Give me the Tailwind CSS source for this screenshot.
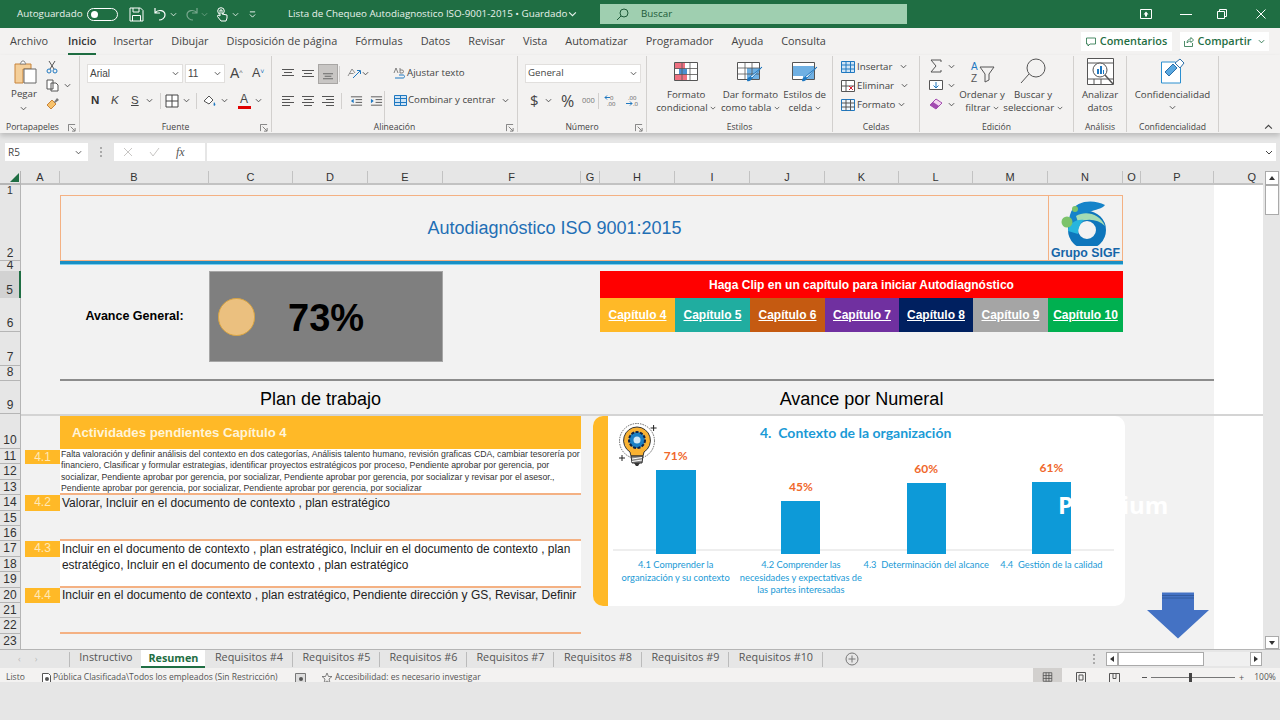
<!DOCTYPE html>
<html lang="es">
<head>
    <meta charset="UTF-8">
    <meta name="viewport" content="width=device-width, initial-scale=1.0">
    <title>Lista de Chequeo Autodiagnostico ISO-9001-2015</title>
    <script src="https://cdn.jsdelivr.net/npm/@tailwindcss/browser@4"></script>
</head>
<body class="bg-[#e6e6e6] overflow-hidden">
<svg class="hidden">
    <symbol id="chev" viewBox="0 0 8 5"><path d="M1 1l3 3 3-3" fill="none" stroke="currentColor" stroke-width="1"/></symbol>
    <symbol id="launch" viewBox="0 0 9 9"><path d="M.5 8V.5H8M3 3l4.500 4.500M4.500 8H8V4.500" fill="none" stroke="#666" stroke-width=".9"/></symbol>
    <symbol id="lines" viewBox="0 0 14 12"><path d="M1 1.500h12M1 4.500h12M1 7.500h12M1 10.500h12" stroke="#555" stroke-width="1"/></symbol>
    <symbol id="linesc" viewBox="0 0 14 12"><path d="M1 1.500h12M3 4.500h8M1 7.500h12M3 10.500h8" stroke="#555" stroke-width="1"/></symbol>
    <symbol id="linesr" viewBox="0 0 14 12"><path d="M1 1.500h12M5 4.500h8M1 7.500h12M5 10.500h8" stroke="#555" stroke-width="1"/></symbol>
    <symbol id="linesl" viewBox="0 0 14 12"><path d="M1 1.500h12M1 4.500h8M1 7.500h12M1 10.500h8" stroke="#555" stroke-width="1"/></symbol>
    <symbol id="table" viewBox="0 0 14 14"><path d="M1 1h12v12H1zM1 7h12M7 1v12" fill="#fff" stroke="#444" stroke-width="1"/></symbol>
</svg>
<div class="w-[1280px] h-[720px] flex flex-col font-['Open_Sans',sans-serif] text-[#444]">

    <!-- Title bar -->
    <header class="h-[28px] bg-[#1f6e43] text-[#e8f2ec] flex items-center text-[9.8px] shrink-0 relative">
        <span class="ml-[17px] w-[70px]">Autoguardado</span>
        <span class="w-[31px] h-[13px] rounded-full border border-white flex items-center pl-[3px]"><span class="w-[7px] h-[7px] rounded-full bg-white"></span></span>
        <svg class="ml-[11px] w-[15px] h-[15px]" viewBox="0 0 15 15"><path d="M1 1h10.500L14 3.500V14H1zM4 1v4h6V1M3.500 14V8.500h8V14" fill="none" stroke="#fff" stroke-width="1"/></svg>
        <svg class="ml-[9px] w-[14px] h-[14px]" viewBox="0 0 14 14"><path d="M2 1v5h5M2 6c3-4 10-3 10 2 0 3-3 5-6 5" fill="none" stroke="#fff" stroke-width="1.200"/></svg>
        <svg class="ml-[3px] w-[7px] h-[5px]"><use href="#chev"/></svg>
        <svg class="ml-[8px] w-[14px] h-[14px] opacity-40" viewBox="0 0 14 14"><path d="M12 1v5H7M12 6C9 2 2 3 2 8c0 3 3 5 6 5" fill="none" stroke="#fff" stroke-width="1.200"/></svg>
        <svg class="ml-[2px] w-[7px] h-[5px] opacity-40"><use href="#chev"/></svg>
        <svg class="ml-[8px] w-[12px] h-[15px]" viewBox="0 0 12 15"><circle cx="5" cy="4" r="3.300" fill="none" stroke="#fff"/><path d="M4 3v6L2 8 1.500 9.500 5 14h5l1-3V8L6 7V3z" fill="#1f6e43" stroke="#fff"/></svg>
        <svg class="ml-[4px] w-[7px] h-[5px]"><use href="#chev"/></svg>
        <svg class="ml-[10px] w-[7px] h-[7px]" viewBox="0 0 8 8"><path d="M1 1h6M1 4l3 3 3-3" fill="none" stroke="#fff"/></svg>
        <span class="ml-[32px] w-[280px] whitespace-nowrap">Lista de Chequeo Autodiagnostico ISO-9001-2015 &bull; Guardado</span>
        <svg class="w-[9px] h-[6px]"><use href="#chev"/></svg>
        <div class="ml-[23px] w-[307px] h-[20px] bg-[#9fcfb0] flex items-center text-[#1d5a38]">
            <svg class="ml-[16px] w-[13px] h-[13px]" viewBox="0 0 13 13"><circle cx="8" cy="5" r="4" fill="none" stroke="#1d5a38"/><path d="M5 8l-4 4" stroke="#1d5a38"/></svg>
            <span class="ml-[12px]">Buscar</span>
        </div>
        <div class="ml-[233px] flex items-center gap-[25px]">
            <svg class="w-[12px] h-[10px]" viewBox="0 0 12 10"><path d="M.5.500h11v9H.5z" fill="none" stroke="#fff"/><path d="M6 2.500L3.500 5.500h1.500v2h2v-2h1.500z" fill="#fff"/></svg>
            <span class="w-[12px] h-px bg-white ml-[3px]"></span>
            <svg class="w-[10px] h-[10px]" viewBox="0 0 10 10"><path d="M.5 2.500h7v7h-7zM2.500 2.500v-2h7v7h-2" fill="none" stroke="#fff"/></svg>
            <svg class="ml-[4px] w-[10px] h-[10px]" viewBox="0 0 10 10"><path d="M.5.500l9 9M9.500.500l-9 9" stroke="#fff"/></svg>
        </div>
    </header>

    <!-- Ribbon tabs -->
    <nav class="h-[27px] bg-[#f3f2f1] flex items-center pl-[10px] text-[10.9px] text-[#444] shrink-0 relative">
        <div class="flex gap-[18px]">
            <span>Archivo</span>
            <span class="relative ml-[2px] -mr-[1px] font-semibold text-[#333]">Inicio<span class="absolute left-0 right-0 -bottom-[5px] h-[2px] bg-[#1f6e43]"></span></span>
            <span>Insertar</span>
            <span>Dibujar</span>
            <span>Disposición de página</span>
            <span>Fórmulas</span>
            <span>Datos</span>
            <span>Revisar</span>
            <span>Vista</span>
            <span>Automatizar</span>
            <span>Programador</span>
            <span>Ayuda</span>
            <span>Consulta</span>
        </div>
        <div class="ml-auto mr-[11px] flex gap-[8px] text-[#1f6e43] font-semibold">
            <span class="w-[91px] h-[19px] bg-white flex items-center justify-center gap-[4px]">
                <svg class="w-[10px] h-[10px]" viewBox="0 0 10 10"><path d="M.5 1h9v6H4L2 9V7H.5z" fill="none" stroke="#1f6e43" stroke-width=".8"/></svg>Comentarios</span>
            <span class="w-[89px] h-[19px] bg-white flex items-center justify-center gap-[4px]">
                <svg class="w-[10px] h-[10px]" viewBox="0 0 10 10"><path d="M.5 4v5.500h8V6M3 6c0-3 2-4 4-4V.5l2.500 2.500L7 5.500V4C5 4 4 5 3 6z" fill="none" stroke="#1f6e43" stroke-width=".8"/></svg>Compartir
                <svg class="w-[7px] h-[5px] ml-[3px]"><use href="#chev"/></svg></span>
        </div>
    </nav>

    <!-- Ribbon -->
    <section class="h-[78px] bg-[#f3f2f1] flex text-[9.7px] shrink-0 relative shadow-[0_3px_5px_rgba(0,0,0,0.18)] z-10">
        <!-- Portapapeles -->
        <div class="w-[80px] relative flex flex-col border-r border-[#d2d0ce] my-[1px]">
            <div class="flex-1 flex pt-[3px]">
                <div class="w-[46px] flex flex-col items-center">
                    <svg class="ml-[3px] w-[26px] h-[26px]" viewBox="0 0 26 26"><path d="M3 5h16v5H11v14H3z" fill="#f4cf9a" stroke="#c8843a"/><path d="M8 5l2-3h2l2 3z" fill="#fff" stroke="#888"/><path d="M12 10h12v14H12z" fill="#fff" stroke="#666"/></svg>
                    <span class="mt-[2px] ml-[2px] text-[#444]">Pegar</span>
                    <svg class="mt-[4px] w-[7px] h-[5px]"><use href="#chev"/></svg>
                </div>
                <div class="flex flex-col items-start gap-[5px] pt-[1px]">
                    <svg class="w-[12px] h-[14px]" viewBox="0 0 12 14"><path d="M3 1l5 8M9 1L4 9" stroke="#555"/><circle cx="3" cy="11" r="2" fill="none" stroke="#1f78c0"/><circle cx="9" cy="11" r="2" fill="none" stroke="#1f78c0"/></svg>
                    <div class="flex items-center gap-[4px]"><svg class="w-[14px] h-[13px]" viewBox="0 0 14 13"><path d="M1 1h6v9H1zM5 4h5l2 2v6H5z" fill="#fff" stroke="#555"/></svg><svg class="w-[7px] h-[5px]"><use href="#chev"/></svg></div>
                    <svg class="w-[14px] h-[13px]" viewBox="0 0 14 13"><path d="M1 8l5-5 4 4-5 5z" fill="#f7c26b" stroke="#c8843a"/><path d="M8 5l3-4 2 2-4 3z" fill="#777"/></svg>
                </div>
            </div>
            <span class="h-[9px] leading-[9px] pl-[6px] text-[8.6px]">Portapapeles</span>
            <svg class="absolute right-[3px] bottom-0 w-[8px] h-[8px]"><use href="#launch"/></svg>
        </div>
        <!-- Fuente -->
        <div class="w-[192px] relative flex flex-col border-r border-[#d2d0ce] my-[1px]">
            <div class="flex-1 pl-[7px] pt-[8px]">
                <div class="flex items-center h-[19px] font-['Liberation_Sans',sans-serif] text-[10px]">
                    <span class="w-[96px] h-[19px] bg-white border border-[#e1dfdd] pl-[2px] flex items-center justify-between pr-[3px]">Arial<svg class="w-[7px] h-[5px]"><use href="#chev"/></svg></span>
                    <span class="ml-[2px] w-[40px] h-[19px] bg-white border border-[#e1dfdd] pl-[2px] flex items-center justify-between pr-[3px]">11<svg class="w-[7px] h-[5px]"><use href="#chev"/></svg></span>
                    <span class="ml-[5px] text-[14px] w-[22px]">A<sup class="text-[7px] text-[#555]">^</sup></span>
                    <span class="text-[12.5px]">A<sup class="text-[7px] text-[#1f78c0]">˅</sup></span>
                </div>
                <div class="flex items-center h-[19px] mt-[8px] pl-[4px]">
                    <span class="w-[20px] font-bold text-[11.5px] text-[#333] font-['Liberation_Sans',sans-serif]">N</span>
                    <span class="w-[20px] italic text-[11.5px] font-['Liberation_Sans',sans-serif]">K</span>
                    <span class="w-[15px] underline text-[11.5px] font-['Liberation_Sans',sans-serif]">S</span>
                    <svg class="w-[7px] h-[5px] mr-[7px]"><use href="#chev"/></svg>
                    <span class="w-px h-[16px] bg-[#d2d0ce] mr-[4px]"></span>
                    <svg class="w-[14px] h-[14px] mr-[4px]"><use href="#table"/></svg>
                    <svg class="w-[7px] h-[5px] mr-[6px]"><use href="#chev"/></svg>
                    <span class="w-px h-[16px] bg-[#d2d0ce] mr-[6px]"></span>
                    <svg class="w-[14px] h-[13px] mr-[4px]" viewBox="0 0 14 13"><path d="M1 7l5-5 4 4-4 4z" fill="#fff" stroke="#555"/><path d="M11 8c1 1.500 2 2.500 1 3.500s-2 0-1-3.500z" fill="#1f78c0"/></svg>
                    <svg class="w-[7px] h-[5px] mr-[9px]"><use href="#chev"/></svg>
                    <span class="w-[14px] flex flex-col items-center text-[12px] leading-[12px] font-['Liberation_Sans',sans-serif]">A<span class="block w-[13px] h-[3px] bg-[#e00000] mt-[1px]"></span></span>
                    <svg class="w-[7px] h-[5px] ml-[4px]"><use href="#chev"/></svg>
                </div>
            </div>
            <span class="h-[9px] leading-[9px] text-center text-[8.6px]">Fuente</span>
            <svg class="absolute right-[3px] bottom-0 w-[8px] h-[8px]"><use href="#launch"/></svg>
        </div>
        <!-- Alineación -->
        <div class="w-[246px] relative flex flex-col border-r border-[#d2d0ce] my-[1px]">
            <div class="flex-1 pl-[9px] pt-[8px]">
                <div class="flex items-center h-[19px]">
                    <svg class="w-[14px] h-[12px] mr-[6px]" viewBox="0 0 14 12"><path d="M1 1.500h12M3 4.500h8M1 7.500h12" stroke="#555"/></svg>
                    <svg class="w-[14px] h-[12px] mr-[3px]" viewBox="0 0 14 12"><path d="M1 2.500h12M3 5.500h8M1 8.500h12" stroke="#555"/></svg>
                    <span class="w-[20px] h-[20px] bg-[#c8c6c4] border border-[#a8a6a4] flex items-center justify-center"><svg class="w-[12px] h-[10px] mt-[3px]" viewBox="0 0 14 12"><path d="M1 4.500h12M3 7.500h8M1 10.500h12" stroke="#555"/></svg></span>
                    <span class="w-px h-[16px] bg-[#d2d0ce] ml-[1px] mr-[7px]"></span>
                    <svg class="w-[14px] h-[13px]" viewBox="0 0 14 13"><path d="M1 9l4-7 3 4M2.500 6.500h4" fill="none" stroke="#777" stroke-width=".8"/><path d="M6 11l7-7M10 3.500h3.500V7" fill="none" stroke="#1f78c0"/></svg>
                    <svg class="ml-[1px] w-[7px] h-[5px]"><use href="#chev"/></svg>
                    <span class="w-px h-[38px] bg-[#d2d0ce] ml-[15px] mr-[8px] mt-[27px] -mb-[8px] self-start"></span>
                    <svg class="w-[13px] h-[13px]" viewBox="0 0 13 13"><path d="M1 6l2-5 2 5M7 1v5h2a1.500 1.500 0 0 0 0-3H7" fill="none" stroke="#666" stroke-width=".8"/><path d="M2 11h8c2 0 2-3 0-3H6" fill="none" stroke="#1f78c0"/></svg>
                    <span class="ml-[1px]">Ajustar texto</span>
                </div>
                <div class="flex items-center h-[19px] mt-[8px]">
                    <svg class="w-[14px] h-[12px] mr-[6px]"><use href="#linesl"/></svg>
                    <svg class="w-[14px] h-[12px] mr-[6px]"><use href="#linesc"/></svg>
                    <svg class="w-[14px] h-[12px] mr-[6px]"><use href="#linesr"/></svg>
                    <span class="w-px h-[16px] bg-[#d2d0ce] mr-[8px]"></span>
                    <svg class="w-[13px] h-[12px] mr-[7px]" viewBox="0 0 14 12"><path d="M1 1.500h12M6 4.500h7M6 7.500h7M1 10.500h12" stroke="#555"/><path d="M4 3.500L1 6l3 2.500z" fill="#1f78c0"/></svg>
                    <svg class="w-[13px] h-[12px] mr-[6px]" viewBox="0 0 14 12"><path d="M1 1.500h12M6 4.500h7M6 7.500h7M1 10.500h12" stroke="#555"/><path d="M1 3.500L4 6 1 8.500z" fill="#1f78c0"/></svg>
                    <span class="w-[5px]"></span>
                    <svg class="w-[13px] h-[13px]" viewBox="0 0 13 13"><path d="M.5 1.500h12v10H.5z" fill="#cfe4f5" stroke="#1f78c0"/><path d="M.5 4.500h12M.5 8.500h12M6.500 1.500v10" stroke="#1f78c0"/></svg>
                    <span class="ml-[1px] whitespace-nowrap">Combinar y centrar</span>
                    <svg class="ml-[7px] w-[7px] h-[5px]"><use href="#chev"/></svg>
                </div>
            </div>
            <span class="h-[9px] leading-[9px] text-center text-[8.6px]">Alineación</span>
            <svg class="absolute right-[3px] bottom-0 w-[8px] h-[8px]"><use href="#launch"/></svg>
        </div>
        <!-- Número -->
        <div class="w-[129px] relative flex flex-col border-r border-[#d2d0ce] my-[1px]">
            <div class="flex-1 pl-[7px] pt-[8px]">
                <span class="w-[116px] h-[19px] bg-white border border-[#e1dfdd] pl-[2px] pr-[3px] flex items-center justify-between">General<svg class="w-[7px] h-[5px]"><use href="#chev"/></svg></span>
                <div class="flex items-center h-[19px] mt-[8px] pl-[5px]">
                    <span class="text-[15px] w-[15px]">$</span>
                    <svg class="w-[7px] h-[5px] mr-[9px]"><use href="#chev"/></svg>
                    <span class="text-[16px] w-[21px]">%</span>
                    <span class="text-[7.5px] w-[16px] text-[#777]">000</span>
                    <span class="w-px h-[16px] bg-[#d2d0ce] mr-[5px]"></span>
                    <svg class="w-[14px] h-[13px] mr-[7px]" viewBox="0 0 14 13"><text x="6" y="6" font-size="6" fill="#555">0</text><text x="3" y="12" font-size="6" fill="#555">.00</text><path d="M6 3.500H1M3 1.500l-2 2 2 2" fill="none" stroke="#1f78c0"/></svg>
                    <svg class="w-[14px] h-[13px]" viewBox="0 0 14 13"><text x="3" y="6" font-size="6" fill="#555">.00</text><text x="8" y="12" font-size="6" fill="#555">.0</text><path d="M1 9.500h6M5 7.500l2 2-2 2" fill="none" stroke="#1f78c0"/></svg>
                </div>
            </div>
            <span class="h-[9px] leading-[9px] text-center text-[8.6px]">Número</span>
            <svg class="absolute right-[3px] bottom-0 w-[8px] h-[8px]"><use href="#launch"/></svg>
        </div>
        <!-- Estilos -->
        <div class="w-[186px] flex flex-col border-r border-[#d2d0ce] my-[1px]">
            <div class="flex-1 flex pt-[6px] leading-[13px] text-center">
                <div class="w-[73px] ml-[3px] flex flex-col items-center">
                    <svg class="w-[24px] h-[19px] mb-[7px]" viewBox="0 0 24 19"><path d="M.5.500h23v18H.5z" fill="#fff" stroke="#555"/><path d="M1 1h10v6H1zM1 12h12v6H1z" fill="#ee7080"/><path d="M5 7h8v5H5z" fill="#4a90d0"/><path d="M.5 6.500h23M.5 12.500h23M8 .5v18M16 .5v18" stroke="#555" stroke-width=".8" fill="none"/></svg>
                    <span>Formato</span>
                    <span class="whitespace-nowrap">condicional <svg class="inline w-[6px] h-[4px] align-middle"><use href="#chev"/></svg></span>
                </div>
                <div class="w-[56px] flex flex-col items-center">
                    <svg class="w-[26px] h-[21px] mb-[5px]" viewBox="0 0 26 21"><path d="M.5.500h22v17H.5z" fill="#fff" stroke="#555"/><path d="M10 6h12v11H10z" fill="#6fb0e3"/><path d="M.5 6h22M.5 12h22M8 .5v17M15 .5v17" stroke="#555" stroke-width=".8" fill="none"/><path d="M25 5L15 16l-2-1z" fill="#fff" stroke="#1f78c0"/><path d="M13 15c-2 0-3 2-3 4 2 1 5-1 5-3z" fill="#1f78c0"/></svg>
                    <span class="whitespace-nowrap">Dar formato</span>
                    <span class="whitespace-nowrap">como tabla <svg class="inline w-[6px] h-[4px] align-middle"><use href="#chev"/></svg></span>
                </div>
                <div class="w-[55px] ml-[-1px] flex flex-col items-center">
                    <svg class="w-[26px] h-[21px] mb-[5px]" viewBox="0 0 26 21"><path d="M.5.500h22v17H.5z" fill="#fff" stroke="#555"/><path d="M1 4h21v13H11v-3H1z" fill="#6fb0e3"/><path d="M25 5L15 16l-2-1z" fill="#fff" stroke="#1f78c0"/><path d="M13 15c-2 0-3 2-3 4 2 1 5-1 5-3z" fill="#1f78c0"/></svg>
                    <span class="whitespace-nowrap">Estilos de</span>
                    <span class="whitespace-nowrap">celda <svg class="inline w-[6px] h-[4px] align-middle"><use href="#chev"/></svg></span>
                </div>
            </div>
            <span class="h-[9px] leading-[9px] text-center text-[8.6px]">Estilos</span>
        </div>
        <!-- Celdas -->
        <div class="w-[87px] flex flex-col border-r border-[#d2d0ce] my-[1px]">
            <div class="flex-1 pl-[8px] pt-[2px] flex flex-col gap-[2px] leading-[17px]">
                <div class="flex items-center h-[17px]"><svg class="w-[14px] h-[12px] mr-[2px]" viewBox="0 0 14 12"><path d="M.5.500h13v11H.5z" fill="#cfe4f5" stroke="#1f78c0"/><path d="M.5 4h13M.5 8h13M5 .5v11M9.500.5v11" stroke="#1f78c0"/></svg>Insertar<svg class="ml-[8px] w-[7px] h-[5px]"><use href="#chev"/></svg></div>
                <div class="flex items-center h-[17px]"><svg class="w-[14px] h-[12px] mr-[2px]" viewBox="0 0 14 12"><path d="M.5.500h13v11H.5z" fill="#fff" stroke="#555"/><path d="M.5 6h13M5 .5v11" stroke="#555"/><path d="M8 6l4 4M12 6l-4 4" stroke="#d23"/></svg>Eliminar<svg class="ml-[7px] w-[7px] h-[5px]"><use href="#chev"/></svg></div>
                <div class="flex items-center h-[17px]"><svg class="w-[14px] h-[12px] mr-[2px]" viewBox="0 0 14 12"><path d="M.5.500h13v11H.5z" fill="#eef6fc" stroke="#1f78c0"/><path d="M.5 4h13M.5 8h13M5 .5v11M9.500.5v11" stroke="#555"/></svg>Formato<svg class="ml-[3px] w-[7px] h-[5px]"><use href="#chev"/></svg></div>
            </div>
            <span class="h-[9px] leading-[9px] text-center text-[8.6px]">Celdas</span>
        </div>
        <!-- Edición -->
        <div class="w-[154px] flex flex-col border-r border-[#d2d0ce] my-[1px]">
            <div class="flex-1 flex">
                <div class="w-[34px] shrink-0 pl-[9px] pt-[3px] flex flex-col gap-[5px]">
                    <div class="flex items-center gap-[5px]"><svg class="w-[14px] h-[14px] shrink-0" viewBox="0 0 14 14"><path d="M12 3V1H2l5 6-5 6h10v-2" fill="none" stroke="#555"/></svg><svg class="w-[7px] h-[5px] shrink-0"><use href="#chev"/></svg></div>
                    <div class="flex items-center gap-[5px]"><svg class="w-[14px] h-[14px] shrink-0" viewBox="0 0 14 14"><path d="M.5 2.500h13v9H.5z" fill="#fff" stroke="#555"/><path d="M7 4v6M4.500 7.500L7 10l2.500-2.500" fill="none" stroke="#1f78c0"/></svg><svg class="w-[7px] h-[5px] shrink-0"><use href="#chev"/></svg></div>
                    <div class="flex items-center gap-[5px]"><svg class="w-[14px] h-[14px] shrink-0" viewBox="0 0 14 14"><path d="M1 8l6-6 6 4-6 6z" fill="#f3d7f0" stroke="#a24bb0"/><path d="M1 8l3-3 6 4-3 3z" fill="#a24bb0"/></svg><svg class="w-[7px] h-[5px] shrink-0"><use href="#chev"/></svg></div>
                </div>
                <div class="w-[56px] shrink-0 pt-[4px] flex flex-col items-center text-center leading-[13px]">
                    <svg class="w-[25px] h-[25px] mb-[3px]" viewBox="0 0 25 25"><text x="1" y="10" font-size="10" fill="#1f78c0" font-family="Liberation Sans">A</text><text x="1" y="22" font-size="10" fill="#555" font-family="Liberation Sans">Z</text><path d="M10 7h14l-5 7v6l-4 2v-8z" fill="none" stroke="#555"/></svg>
                    <span class="whitespace-nowrap">Ordenar y</span>
                    <span class="whitespace-nowrap">filtrar <svg class="inline w-[6px] h-[4px] align-middle"><use href="#chev"/></svg></span>
                </div>
                <div class="w-[46px] shrink-0 pt-[2px] flex flex-col items-center text-center leading-[13px]">
                    <svg class="w-[26px] h-[26px] mb-[4px]" viewBox="0 0 26 26"><circle cx="16" cy="10" r="9" fill="none" stroke="#555"/><path d="M9 16l-8 9" stroke="#555"/></svg>
                    <span class="whitespace-nowrap">Buscar y</span>
                    <span class="whitespace-nowrap">seleccionar <svg class="inline w-[6px] h-[4px] align-middle"><use href="#chev"/></svg></span>
                </div>
            </div>
            <span class="h-[9px] leading-[9px] text-center text-[8.6px]">Edición</span>
        </div>
        <!-- Análisis -->
        <div class="w-[53px] flex flex-col border-r border-[#d2d0ce] my-[1px]">
            <div class="flex-1 pt-[2px] flex flex-col items-center leading-[13px]">
                <svg class="w-[27px] h-[27px] mb-[3px]" viewBox="0 0 27 27"><path d="M.5.500h26v26H.5zM.5 5h26M.5 21h26M7 21v5M14 21v5" fill="#fff" stroke="#555"/><circle cx="13" cy="12" r="7" fill="#fff" stroke="#555"/><path d="M10 11h2v5h-2zM13 8h2v8h-2zM16 12h1v4h-1z" fill="#1f78c0"/><path d="M18 17l8 9" stroke="#555" stroke-width="1.500"/></svg>
                <span>Analizar</span><span>datos</span>
            </div>
            <span class="h-[9px] leading-[9px] text-center text-[8.6px]">Análisis</span>
        </div>
        <!-- Confidencialidad -->
        <div class="w-[92px] flex flex-col border-r border-[#d2d0ce] my-[1px]">
            <div class="flex-1 pt-[2px] flex flex-col items-center leading-[13px]">
                <svg class="w-[24px] h-[26px] mb-[4px]" viewBox="0 0 24 26"><path d="M.5 4h14l5 5v16H.5z" fill="#fff" stroke="#2a8fd0"/><path d="M4 14l8-8 4 4-8 8z" fill="#5aa8e0" stroke="#2a6ea8"/><path d="M14 5l5-4 4 4-4 5z" fill="#fff" stroke="#2a6ea8"/></svg>
                <span>Confidencialidad</span>
                <svg class="mt-[4px] w-[7px] h-[5px]"><use href="#chev"/></svg>
            </div>
            <span class="h-[9px] leading-[9px] text-center text-[8.6px]">Confidencialidad</span>
        </div>
        <svg class="absolute right-[7px] bottom-[3px] w-[9px] h-[6px] rotate-180"><use href="#chev"/></svg>
    </section>

    <!-- Formula bar -->
    <div class="h-[38px] pt-[10px] bg-[#e6e6e6] flex text-[10px] shrink-0">
        <span class="ml-[5px] w-[83px] h-[18px] bg-white pl-[3px] flex items-center justify-between pr-[6px]">R5<svg class="w-[7px] h-[5px]"><use href="#chev"/></svg></span>
        <span class="ml-[11px] w-[3px] h-[18px] flex flex-col justify-center gap-[2px] items-center text-[#999]"><span class="w-[2px] h-[2px] bg-[#aaa]"></span><span class="w-[2px] h-[2px] bg-[#aaa]"></span><span class="w-[2px] h-[2px] bg-[#aaa]"></span></span>
        <div class="ml-[12px] w-[91px] h-[18px] bg-white flex items-center pl-[9px]">
            <svg class="w-[10px] h-[10px]" viewBox="0 0 10 10"><path d="M1 1l8 8M9 1L1 9" stroke="#c8c6c4"/></svg>
            <svg class="ml-[16px] w-[11px] h-[10px]" viewBox="0 0 11 10"><path d="M1 5l3 4 6-8" fill="none" stroke="#c8c6c4"/></svg>
            <span class="ml-[16px] font-['Liberation_Serif',serif] italic text-[12px] text-[#555]">fx</span>
        </div>
        <div class="ml-[2px] w-[1069px] h-[18px] bg-white flex items-center justify-end pr-[3px]"><svg class="w-[8px] h-[5px]"><use href="#chev"/></svg></div>
    </div>

    <!-- Sheet -->
    <div class="h-[478px] flex shrink-0 relative overflow-hidden">
        <div class="w-[1263px] h-[478px] bg-[#f2f2f2] grid grid-cols-[21px_39px_149px_84px_75px_75px_138px_19px_75px_75px_75px_74px_74px_75px_75px_18px_73px_49px] grid-rows-[14px_10px_66px_10px_27px_34px_34px_15px_33px_35px_repeat(13,15.4px)] font-['Liberation_Sans',sans-serif] text-[11px] text-[#333] relative">
            <!-- column headers -->
            <div class="col-[1/2] row-[1/2] bg-[#e6e6e6] border-r border-b-2 border-[#b5b5b5] flex items-end justify-end pr-[1px] pb-[1px]"><svg class="w-[9px] h-[9px]" viewBox="0 0 9 9"><path d="M9 0v9H0z" fill="#1f6e43"/></svg></div>
            <div class="col-[2/3] row-[1/2] bg-[#e6e6e6] border-r border-b-2 border-[#c2c2c2] text-center leading-[13px]">A</div>
            <div class="col-[3/4] row-[1/2] bg-[#e6e6e6] border-r border-b-2 border-[#c2c2c2] text-center leading-[13px]">B</div>
            <div class="col-[4/5] row-[1/2] bg-[#e6e6e6] border-r border-b-2 border-[#c2c2c2] text-center leading-[13px]">C</div>
            <div class="col-[5/6] row-[1/2] bg-[#e6e6e6] border-r border-b-2 border-[#c2c2c2] text-center leading-[13px]">D</div>
            <div class="col-[6/7] row-[1/2] bg-[#e6e6e6] border-r border-b-2 border-[#c2c2c2] text-center leading-[13px]">E</div>
            <div class="col-[7/8] row-[1/2] bg-[#e6e6e6] border-r border-b-2 border-[#c2c2c2] text-center leading-[13px]">F</div>
            <div class="col-[8/9] row-[1/2] bg-[#e6e6e6] border-r border-b-2 border-[#c2c2c2] text-center leading-[13px]">G</div>
            <div class="col-[9/10] row-[1/2] bg-[#e6e6e6] border-r border-b-2 border-[#c2c2c2] text-center leading-[13px]">H</div>
            <div class="col-[10/11] row-[1/2] bg-[#e6e6e6] border-r border-b-2 border-[#c2c2c2] text-center leading-[13px]">I</div>
            <div class="col-[11/12] row-[1/2] bg-[#e6e6e6] border-r border-b-2 border-[#c2c2c2] text-center leading-[13px]">J</div>
            <div class="col-[12/13] row-[1/2] bg-[#e6e6e6] border-r border-b-2 border-[#c2c2c2] text-center leading-[13px]">K</div>
            <div class="col-[13/14] row-[1/2] bg-[#e6e6e6] border-r border-b-2 border-[#c2c2c2] text-center leading-[13px]">L</div>
            <div class="col-[14/15] row-[1/2] bg-[#e6e6e6] border-r border-b-2 border-[#c2c2c2] text-center leading-[13px]">M</div>
            <div class="col-[15/16] row-[1/2] bg-[#e6e6e6] border-r border-b-2 border-[#c2c2c2] text-center leading-[13px]">N</div>
            <div class="col-[16/17] row-[1/2] bg-[#e6e6e6] border-r border-b-2 border-[#c2c2c2] text-center leading-[13px]">O</div>
            <div class="col-[17/18] row-[1/2] bg-[#e6e6e6] border-r border-b-2 border-[#c2c2c2] text-center leading-[13px]">P</div>
            <div class="col-[18/19] row-[1/2] bg-[#e6e6e6] border-b-2 border-[#c2c2c2] text-right pr-[7px] leading-[13px]">Q</div>

            <!-- row headers -->
            <div class="col-[1/2] row-[2/3] bg-[#e6e6e6] border-r border-[#b5b5b5] text-center text-[10.5px] leading-[10px]">1</div>
            <div class="col-[1/2] row-[3/4] bg-[#e6e6e6] border-r border-b border-[#b5b5b5] text-center flex items-end justify-center text-[12px] leading-[13px]">2</div>
            <div class="col-[1/2] row-[4/5] bg-[#e6e6e6] border-r border-[#b5b5b5] text-center overflow-hidden text-[12px] leading-[8px]">4</div>
            <div class="col-[1/2] row-[5/6] bg-[#d2d2d2] border-r-2 border-[#1f6e43] flex items-end justify-center text-[12px] leading-[15px]">5</div>
            <div class="col-[1/2] row-[6/7] bg-[#e6e6e6] border-r border-b border-[#b5b5b5] flex items-end justify-center text-[12px] leading-[15px]">6</div>
            <div class="col-[1/2] row-[7/8] bg-[#e6e6e6] border-r border-b border-[#b5b5b5] flex items-end justify-center text-[12px] leading-[15px]">7</div>
            <div class="col-[1/2] row-[8/9] bg-[#e6e6e6] border-r border-b border-[#b5b5b5] flex items-end justify-center text-[12px] leading-[15px]">8</div>
            <div class="col-[1/2] row-[9/10] bg-[#e6e6e6] border-r border-b border-[#b5b5b5] flex items-end justify-center text-[12px] leading-[15px]">9</div>
            <div class="col-[1/2] row-[10/11] bg-[#e6e6e6] border-r border-b border-[#b5b5b5] flex items-end justify-center text-[12px] leading-[15px]">10</div>
            <div class="col-[1/2] row-[11/12] bg-[#e6e6e6] border-r border-b border-[#b5b5b5] text-center text-[12px] leading-[15px]">11</div>
            <div class="col-[1/2] row-[12/13] bg-[#e6e6e6] border-r border-b border-[#b5b5b5] text-center text-[12px] leading-[15px]">12</div>
            <div class="col-[1/2] row-[13/14] bg-[#e6e6e6] border-r border-b border-[#b5b5b5] text-center text-[12px] leading-[15px]">13</div>
            <div class="col-[1/2] row-[14/15] bg-[#e6e6e6] border-r border-b border-[#b5b5b5] text-center text-[12px] leading-[15px]">14</div>
            <div class="col-[1/2] row-[15/16] bg-[#e6e6e6] border-r border-b border-[#b5b5b5] text-center text-[12px] leading-[15px]">15</div>
            <div class="col-[1/2] row-[16/17] bg-[#e6e6e6] border-r border-b border-[#b5b5b5] text-center text-[12px] leading-[15px]">16</div>
            <div class="col-[1/2] row-[17/18] bg-[#e6e6e6] border-r border-b border-[#b5b5b5] text-center text-[12px] leading-[15px]">17</div>
            <div class="col-[1/2] row-[18/19] bg-[#e6e6e6] border-r border-b border-[#b5b5b5] text-center text-[12px] leading-[15px]">18</div>
            <div class="col-[1/2] row-[19/20] bg-[#e6e6e6] border-r border-b border-[#b5b5b5] text-center text-[12px] leading-[15px]">19</div>
            <div class="col-[1/2] row-[20/21] bg-[#e6e6e6] border-r border-b border-[#b5b5b5] text-center text-[12px] leading-[15px]">20</div>
            <div class="col-[1/2] row-[21/22] bg-[#e6e6e6] border-r border-b border-[#b5b5b5] text-center text-[12px] leading-[15px]">21</div>
            <div class="col-[1/2] row-[22/23] bg-[#e6e6e6] border-r border-b border-[#b5b5b5] text-center text-[12px] leading-[15px]">22</div>
            <div class="col-[1/2] row-[23/24] bg-[#e6e6e6] border-r border-[#b5b5b5] text-center text-[12px] leading-[15px]">23</div>

            <!-- white column Q -->
            <div class="col-[18/19] row-[2/24] bg-white"></div>

            <!-- title -->
            <div class="col-[3/15] row-[3/4] border border-r-0 border-[#f4b183] flex items-center justify-center text-[18px] text-[#1f6fb5]">Autodiagnóstico ISO 9001:2015</div>
            <div class="col-[15/16] row-[3/4] border border-[#f4b183] flex flex-col items-center pt-[2px]">
                <svg class="w-[56px] h-[48px] shrink-0" viewBox="0 0 56 48">
                    <circle cx="29" cy="32" r="14" fill="none" stroke="#0e76bc" stroke-width="10"/>
                    <path d="M47 7C36 1 18 2 13 14c-3 8-3 14-3 18h10c0-8 4-16 14-19 6-2 11-3 13-6z" fill="#1583c9"/>
                    <path d="M18 18c10-6 24-2 29 10-7-7-17-8-27-4z" fill="#a5dcb4"/>
                    <path d="M10 33c1-8 8-12 16-11-4 4-6 8-6 14z" fill="#27b5dd"/>
                    <circle cx="9" cy="24" r="5.500" fill="#7cc36b"/>
                    <circle cx="17" cy="11" r="3" fill="#7cc36b"/>
                </svg>
                <span class="font-bold text-[12.3px] leading-[12px] mt-[1px] text-[#1565a8] whitespace-nowrap">Grupo SIGF</span>
            </div>
            <div class="col-[3/16] row-[4/5] h-[3px] bg-[#1a8fc4] shadow-[0_1px_0_#7fd0ee]"></div>

            <!-- avance general -->
            <div class="col-[3/4] row-[5/8] flex items-center justify-center font-bold text-[12.5px] text-black pb-[4px]">Avance General:</div>
            <div class="col-[4/7] row-[5/8] mb-[4px] bg-[#7f7f7f] border border-[#a6a6a6] flex items-center pl-[8px]">
                <span class="w-[37px] h-[38px] rounded-full bg-[#ebc07f] border border-[#d9a441]"></span>
                <span class="ml-[33px] pt-[3px] font-bold text-[38px] leading-none text-black">73%</span>
            </div>

            <!-- chapter links -->
            <div class="col-[9/16] row-[5/6] bg-[#ff0000] flex items-center justify-center font-bold text-[12px] text-white">Haga Clip en un capítulo para iniciar Autodiagnóstico</div>
            <a class="col-[9/10] row-[6/7] bg-[#ffb927] flex items-center justify-center font-bold text-[12px] text-white underline whitespace-nowrap">Capítulo 4</a>
            <a class="col-[10/11] row-[6/7] bg-[#20ada0] flex items-center justify-center font-bold text-[12px] text-white underline whitespace-nowrap">Capítulo 5</a>
            <a class="col-[11/12] row-[6/7] bg-[#c55a11] flex items-center justify-center font-bold text-[12px] text-white underline whitespace-nowrap">Capítulo 6</a>
            <a class="col-[12/13] row-[6/7] bg-[#7030a0] flex items-center justify-center font-bold text-[12px] text-white underline whitespace-nowrap">Capítulo 7</a>
            <a class="col-[13/14] row-[6/7] bg-[#002060] flex items-center justify-center font-bold text-[12px] text-white underline whitespace-nowrap">Capítulo 8</a>
            <a class="col-[14/15] row-[6/7] bg-[#a5a5a5] flex items-center justify-center font-bold text-[12px] text-white underline whitespace-nowrap">Capítulo 9</a>
            <a class="col-[15/16] row-[6/7] bg-[#00b050] flex items-center justify-center font-bold text-[12px] text-white underline whitespace-nowrap">Capítulo 10</a>

            <!-- section headings -->
            <div class="col-[3/18] row-[8/9] border-b-2 border-[#8c8c8c]"></div>
            <div class="col-[2/19] row-[10/11] border-t-2 border-[#d4d4d4]"></div>
            <div class="col-[3/8] row-[9/10] pt-[3px] flex items-center justify-center text-[18px] text-black">Plan de trabajo</div>
            <div class="col-[9/16] row-[9/10] pt-[3px] flex items-center justify-center text-[18px] text-black">Avance por Numeral</div>

            <!-- pending activities -->
            <div class="col-[3/8] row-[10/11] mt-[2px] bg-[#ffb927] flex items-center pl-[12px] font-bold text-[13.2px] text-[#fff4d8]">Actividades pendientes Capítulo 4</div>

            <div class="col-[2/3] row-[11/12] ml-[4px] mt-[1px] bg-[#ffb927] text-[#ffe9b8] text-[12px] text-center leading-[15px]">4.1</div>
            <div class="col-[3/8] row-[11/14] bg-white border-b-2 border-[#f4b183] text-[8.7px] leading-[11.3px] pl-[1px] whitespace-nowrap text-[#333]">
                Falta valoración y definir análisis del contexto en dos categorías, Análisis talento humano, revisión graficas CDA, cambiar tesorería por<br>
                financiero, Clasificar y formular estrategias, identificar proyectos estratégicos por proceso, Pendiente aprobar por gerencia, por<br>
                socializar, Pendiente aprobar por gerencia, por socializar, Pendiente aprobar por gerencia, por socializar y revisar por el asesor.,<br>
                Pendiente aprobar por gerencia, por socializar, Pendiente aprobar por gerencia, por socializar
            </div>

            <div class="col-[2/3] row-[14/15] ml-[4px] bg-[#ffb927] text-[#ffe9b8] text-[12px] text-center leading-[15px]">4.2</div>
            <div class="col-[3/8] row-[14/17] border-b-2 border-[#f4b183] text-[12px] leading-[15.4px] pl-[2px] pt-[1px] text-[#222]">Valorar, Incluir en el documento de contexto , plan estratégico</div>

            <div class="col-[2/3] row-[17/18] ml-[4px] bg-[#ffb927] text-[#ffe9b8] text-[12px] text-center leading-[15px]">4.3</div>
            <div class="col-[3/8] row-[17/20] bg-white border-b-2 border-[#f4b183] text-[11.9px] leading-[15.4px] pl-[2px] pt-[1px] text-[#222] whitespace-nowrap">Incluir en el documento de contexto , plan estratégico, Incluir en el documento de contexto , plan<br>estratégico, Incluir en el documento de contexto , plan estratégico</div>

            <div class="col-[2/3] row-[20/21] ml-[4px] bg-[#ffb927] text-[#ffe9b8] text-[12px] text-center leading-[15px]">4.4</div>
            <div class="col-[3/8] row-[20/23] border-b-2 border-[#f4b183] text-[12px] leading-[15.4px] pl-[2px] text-[#222] whitespace-nowrap">Incluir en el documento de contexto , plan estratégico, Pendiente dirección y GS, Revisar, Definir</div>

            <!-- floating chart -->
            <div class="absolute left-[593px] top-[245px] w-[532px] h-[190px] bg-white rounded-[10px] overflow-hidden flex font-['Lato',sans-serif] text-[#1a9ad6]">
                <div class="w-[15px] bg-[#ffb927] shrink-0"></div>
                <div class="relative flex-1 pl-[5px]">
                    <svg class="absolute left-[12px] top-[8px] w-[36px] h-[44px] overflow-visible" viewBox="0 0 36 44">
                        <circle cx="17" cy="17" r="17.500" fill="none" stroke="#555" stroke-width=".9" stroke-dasharray="1.500 1"/>
                        <path d="M17 3a13.500 13.500 0 0 1 7 25l-1 4H11l-1-4A13.500 13.500 0 0 1 17 3z" fill="#f9b233" stroke="#333"/>
                        <circle cx="17" cy="16" r="8" fill="#1b7fc4" stroke="#124" stroke-dasharray="3 1.500" stroke-width="2"/>
                        <circle cx="17" cy="16" r="3.500" fill="#cfe8f8"/>
                        <path d="M11 32h12l-1 7h-10z" fill="#888" stroke="#333"/>
                        <path d="M12 35l10-1.500M12 37.500l10-1.500" stroke="#fff"/>
                        <path d="M14 39h6l-2 3h-2z" fill="#333"/>
                        <path d="M33.600 1v6M30.600 4h6M2 31v6M-1 34h6" stroke="#222" stroke-width="1"/>
                    </svg>
                    <div class="h-[35px] pl-[147px] pt-[8px] font-bold text-[14px] leading-[18px] whitespace-pre">4.  Contexto de la organización</div>
                    <div class="grid grid-cols-4 w-[501px] h-[102px] border-b-2 border-[#eeeeee] -mt-[2px] text-[#f0682c] font-bold text-[12px] leading-[14px]">
                        <div class="flex flex-col items-center justify-end"><span class="mb-[7px]">71%</span><span class="w-[40px] h-[84px] bg-[#0d9ad8]"></span></div>
                        <div class="flex flex-col items-center justify-end"><span class="mb-[7px]">45%</span><span class="w-[39px] h-[53px] bg-[#0d9ad8]"></span></div>
                        <div class="flex flex-col items-center justify-end"><span class="mb-[7px]">60%</span><span class="w-[39px] h-[71px] bg-[#0d9ad8]"></span></div>
                        <div class="flex flex-col items-center justify-end"><span class="mb-[7px]">61%</span><span class="w-[39px] h-[72px] bg-[#0d9ad8]"></span></div>
                    </div>
                    <div class="grid grid-cols-4 w-[501px] mt-[8px] text-[9.3px] leading-[12.5px] text-center">
                        <span>4.1 Comprender la<br>organización y su contexto</span>
                        <span>4.2 Comprender las<br>necesidades y expectativas de<br>las partes interesadas</span>
                        <span class="whitespace-pre">4.3  Determinación del alcance</span>
                        <span class="whitespace-pre">4.4  Gestión de la calidad</span>
                    </div>
                </div>
            </div>

            <!-- watermark over the chart -->
            <span class="absolute left-[1058px] top-[320px] text-white font-bold text-[24px] leading-[28px] font-['Open_Sans',sans-serif]">Premium</span>

            <!-- down arrow shape -->
            <svg class="absolute left-[1147px] top-[421px] w-[62px] h-[47px]" viewBox="0 0 62 47"><path d="M15 .5h32V18h15L31 46.500 0 18h15z" fill="#4472c4"/><path d="M15 3.500h32M15 6h32" stroke="#2f5597" stroke-width=".8"/></svg>
        </div>

        <!-- vertical scrollbar -->
        <div class="w-[17px] bg-[#e6e6e6] flex flex-col items-center">
            <span class="mt-[0px] w-[14px] h-[14px] bg-white border border-[#aaa] flex items-center justify-center"><svg class="w-[6px] h-[4px]" viewBox="0 0 6 4"><path d="M3 0l3 4H0z" fill="#333"/></svg></span>
            <span class="w-[14px] h-[30px] bg-white border border-[#aaa]"></span>
            <span class="flex-1"></span>
            <span class="w-[14px] h-[13px] bg-white border border-[#aaa] flex items-center justify-center"><svg class="w-[6px] h-[4px]" viewBox="0 0 6 4"><path d="M3 4L6 0H0z" fill="#333"/></svg></span>
        </div>
    </div>

    <!-- Sheet tabs -->
    <div class="h-[19px] bg-[#e6e6e6] border-t border-[#b5b5b5] flex items-center text-[10.8px] shrink-0 text-[#555]">
        <span class="ml-[18px] text-[#bbb] text-[9px]">&lsaquo;</span>
        <span class="ml-[14px] text-[#bbb] text-[9px]">&rsaquo;</span>
        <span class="ml-[32px] w-px h-[15px] bg-[#bbb]"></span>
        <span class="w-[71px] text-center pb-[3px]">Instructivo</span>
        <span class="w-[64px] h-[18px] self-start bg-white border-b-2 border-[#1f6e43] text-[#1f6e43] font-bold text-center leading-[15px]">Resumen</span>
        <span class="w-[88px] text-center border-r border-[#bbb] h-[15px] leading-[9px]">Requisitos #4</span>
        <span class="w-[87px] text-center border-r border-[#bbb] h-[15px] leading-[9px]">Requisitos #5</span>
        <span class="w-[87px] text-center border-r border-[#bbb] h-[15px] leading-[9px]">Requisitos #6</span>
        <span class="w-[87px] text-center border-r border-[#bbb] h-[15px] leading-[9px]">Requisitos #7</span>
        <span class="w-[88px] text-center border-r border-[#bbb] h-[15px] leading-[9px]">Requisitos #8</span>
        <span class="w-[87px] text-center border-r border-[#bbb] h-[15px] leading-[9px]">Requisitos #9</span>
        <span class="w-[94px] text-center border-r border-[#bbb] h-[15px] leading-[9px]">Requisitos #10</span>
        <svg class="ml-[22px] w-[14px] h-[14px]" viewBox="0 0 14 14"><circle cx="7" cy="7" r="6" fill="none" stroke="#777"/><path d="M7 3.500v7M3.500 7h7" stroke="#777"/></svg>
        <span class="ml-[234px] w-[2px] h-[10px] border-l-2 border-dotted border-[#aaa]"></span>
        <div class="ml-[11px] w-[156px] h-[14px] flex bg-[#f0f0f0] items-center">
            <span class="w-[12px] h-[14px] bg-white border border-[#aaa] flex items-center justify-center"><svg class="w-[4px] h-[6px]" viewBox="0 0 4 6"><path d="M0 3l4-3v6z" fill="#333"/></svg></span>
            <span class="w-[86px] h-[14px] bg-white border border-[#aaa]"></span>
            <span class="flex-1"></span>
            <span class="w-[12px] h-[14px] bg-white border border-[#aaa] flex items-center justify-center"><svg class="w-[4px] h-[6px]" viewBox="0 0 4 6"><path d="M4 3L0 0v6z" fill="#333"/></svg></span>
        </div>
    </div>

    <!-- Status bar -->
    <footer class="h-[14px] pt-[5px] bg-[#f3f2f1] flex items-center text-[8.5px] text-[#555] shrink-0 whitespace-nowrap overflow-hidden">
        <span class="ml-[6px] w-[36px]">Listo</span>
        <svg class="w-[9px] h-[10px]" viewBox="0 0 9 10"><path d="M.5.500h6l2 2v7h-8z" fill="#fff" stroke="#555"/><circle cx="5" cy="6" r="2" fill="#555"/></svg>
        <span class="ml-[2px] w-[242px]">Pública Clasificada\Todos los empleados (Sin Restricción)</span>
        <svg class="w-[11px] h-[10px]" viewBox="0 0 11 10"><path d="M.5.500h10v9H.5z" fill="#ddd" stroke="#777"/><circle cx="6" cy="6" r="2" fill="#555"/></svg>
        <svg class="ml-[15px] w-[12px] h-[12px]" viewBox="0 0 12 12"><path d="M6 1l1.500 3.500H11L8 7l1 4-3-2-3 2 1-4-3-2.500h3.500z" fill="none" stroke="#666" stroke-width=".8"/></svg>
        <span class="ml-[2px] w-[698px]">Accesibilidad: es necesario investigar</span>
        <span class="w-[29px] h-[14px] self-start -mt-[5px] bg-[#d2d0ce] flex items-end justify-center"><svg class="w-[11px] h-[10px]" viewBox="0 0 14 14"><path d="M1 1h12v12H1zM1 5h12M1 9h12M5 1v12M9 1v12" fill="none" stroke="#444"/></svg></span>
        <svg class="ml-[14px] w-[10px] h-[11px]" viewBox="0 0 10 11"><path d="M.5.500h9v10h-9zM3 3h4v5H3z" fill="none" stroke="#555"/></svg>
        <svg class="ml-[23px] w-[11px] h-[10px]" viewBox="0 0 11 10"><path d="M.5 9.500V.5h10v9M4 .5v5h3v-5" fill="none" stroke="#555"/></svg>
        <span class="ml-[22px] w-[5px] h-px bg-[#555]"></span>
        <span class="ml-[4px] relative w-[84px] h-px bg-[#777]"><span class="absolute left-[38px] -top-[4px] w-[3px] h-[9px] bg-[#444]"></span></span>
        <span class="ml-[4px] text-[9px] leading-none">+</span>
        <span class="ml-[10px] leading-none">100%</span>
    </footer>
    <div class="flex-1 bg-[#e6e6e6]"></div>
</div>
</body>
</html>
